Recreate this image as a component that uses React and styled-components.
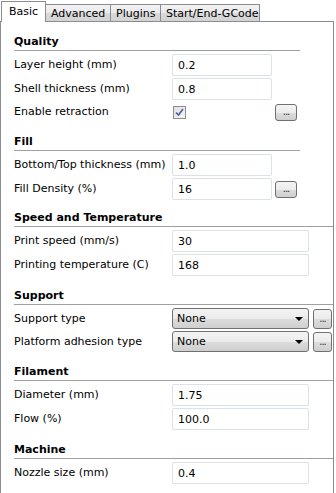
import styled, { createGlobalStyle } from 'styled-components';

const Global = createGlobalStyle`
  html, body { margin: 0; padding: 0; background: #fff; }
  body { font-family: "DejaVu Sans", "Liberation Sans", sans-serif; font-size: 11px; color: #000; }
`;

const Window = styled.div`
  width: 336px;
  height: 493px;
  overflow: hidden;
  background: #fff;
`;

const TabBar = styled.div`
  display: flex;
  align-items: flex-end;
  height: 21px;
  padding-left: 1px;
  position: relative;
  z-index: 1;
`;

const Tab = styled.div`
  box-sizing: border-box;
  display: flex;
  align-items: center;
  width: ${(p) => p.$w}px;
  padding-left: ${(p) => (p.$active ? 7 : 5)}px;
  margin-left: ${(p) => (p.$active ? 0 : -1)}px;
  height: ${(p) => (p.$active ? 21 : 17)}px;
  margin-bottom: ${(p) => (p.$active ? -1 : 0)}px;
  border: 1px solid #898c95;
  border-bottom: none;
  background: ${(p) => (p.$active ? '#fff' : 'linear-gradient(#f3f3f3, #e9e9e9 50%, #dadada 51%, #d3d3d3)')};
  white-space: nowrap;
  line-height: 1;
  padding-bottom: ${(p) => (p.$active ? 2 : 0)}px;
`;

const Panel = styled.div`
  box-sizing: border-box;
  width: 334px;
  height: 480px;
  border: 1px solid #898c95;
  border-bottom: none;
  padding: 12px 0 0 13px;
`;

const Section = styled.section`
  margin-bottom: ${(p) => p.$mb}px;
`;

const Heading = styled.div`
  height: 16px;
  line-height: 16px;
  font-weight: bold;
`;

const Rule = styled.div`
  height: 1px;
  background: #a0a0a0;
  width: ${(p) => (p.$short ? '286px' : 'auto')};
  margin-bottom: 3px;
`;

const Rows = styled.div`
  display: grid;
  grid-template-columns: 158px ${(p) => (p.$wide ? '137px 4px 19px' : '100px 3px 22px')};
  row-gap: 2px;
  align-items: center;
`;

const Label = styled.div`
  grid-column: 1;
  white-space: nowrap;
  line-height: 14px;
`;

const Field = styled.div`
  grid-column: 2;
  box-sizing: border-box;
  height: 22px;
  border: 1px solid #dbe1e8;
  border-radius: 2px;
  padding-left: 5px;
  display: flex;
  align-items: center;
  color: #000;
`;

const Dots = styled.div`
  grid-column: 4;
  box-sizing: border-box;
  height: ${(p) => (p.$tall ? 20 : 17)}px;
  border: 1px solid #707070;
  border-radius: 3px;
  background: linear-gradient(#f4f4f4, #ebebeb 50%, #dddddd 51%, #cfcfcf);
  display: flex;
  justify-content: center;
  align-items: center;
  font-size: 10px;
  letter-spacing: -1px;
  line-height: 1;
  color: #333;
`;

const Select = styled.div`
  grid-column: 2;
  box-sizing: border-box;
  height: 21px;
  border: 1px solid #707070;
  border-radius: 3px;
  background: linear-gradient(#f4f4f4, #ebebeb 50%, #dddddd 51%, #cfcfcf);
  display: flex;
  align-items: center;
  justify-content: space-between;
  padding: 0 5px 0 4px;
`;

const Arrow = styled.span`
  width: 0;
  height: 0;
  border-left: 4px solid transparent;
  border-right: 4px solid transparent;
  border-top: 4px solid #000;
`;

const CheckCell = styled.div`
  grid-column: 2;
  height: 20px;
  display: flex;
  align-items: center;
  padding-left: 1px;
`;

const Box = styled.div`
  box-sizing: border-box;
  width: 13px;
  height: 13px;
  border: 1px solid #8e8f8f;
  background: linear-gradient(135deg, #e0e0e0, #f6f6f6);
  display: flex;
  align-items: center;
  justify-content: center;
`;

function Check() {
  return (
    <Box>
      <svg width="9" height="9" viewBox="0 0 9 9">
        <path d="M1 4.5 L3.5 7 L8 1" fill="none" stroke="#4b5d9a" strokeWidth="1.6" />
      </svg>
    </Box>
  );
}

function InputRow({ label, value, more }) {
  return (
    <>
      <Label>{label}</Label>
      <Field>{value}</Field>
      {more && <Dots>...</Dots>}
    </>
  );
}

function SelectRow({ label }) {
  return (
    <>
      <Label>{label}</Label>
      <Select>
        <span>None</span>
        <Arrow />
      </Select>
      <Dots $tall>...</Dots>
    </>
  );
}

export default function App() {
  return (
    <Window>
      <Global />
      <TabBar>
        <Tab $active $w={45}>Basic</Tab>
        <Tab $w={66}>Advanced</Tab>
        <Tab $w={51}>Plugins</Tab>
        <Tab $w={100}>Start/End-GCode</Tab>
      </TabBar>
      <Panel>
        <Section $mb={12}>
          <Heading>Quality</Heading>
          <Rule $short />
          <Rows>
            <InputRow label="Layer height (mm)" value="0.2" />
            <InputRow label="Shell thickness (mm)" value="0.8" />
            <Label>Enable retraction</Label>
            <CheckCell>
              <Check />
            </CheckCell>
            <Dots>...</Dots>
          </Rows>
        </Section>
        <Section $mb={10}>
          <Heading>Fill</Heading>
          <Rule $short />
          <Rows>
            <InputRow label="Bottom/Top thickness (mm)" value="1.0" />
            <InputRow label="Fill Density (%)" value="16" more />
          </Rows>
        </Section>
        <Section $mb={12}>
          <Heading>Speed and Temperature</Heading>
          <Rule />
          <Rows $wide>
            <InputRow label="Print speed (mm/s)" value="30" />
            <InputRow label="Printing temperature (C)" value="168" />
          </Rows>
        </Section>
        <Section $mb={12}>
          <Heading>Support</Heading>
          <Rule />
          <Rows $wide>
            <SelectRow label="Support type" />
            <SelectRow label="Platform adhesion type" />
          </Rows>
        </Section>
        <Section $mb={12}>
          <Heading>Filament</Heading>
          <Rule />
          <Rows $wide>
            <InputRow label="Diameter (mm)" value="1.75" />
            <InputRow label="Flow (%)" value="100.0" />
          </Rows>
        </Section>
        <Section $mb={12}>
          <Heading>Machine</Heading>
          <Rule />
          <Rows $wide>
            <InputRow label="Nozzle size (mm)" value="0.4" />
          </Rows>
        </Section>
      </Panel>
    </Window>
  );
}
